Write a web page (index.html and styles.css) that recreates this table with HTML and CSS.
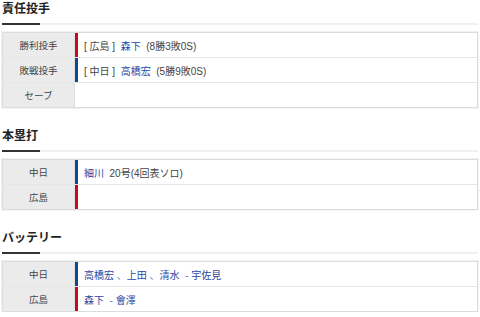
FILE: index.html
```html
<!DOCTYPE html>
<html lang="ja">
<head>
<meta charset="utf-8">
<title>試合結果</title>
<link rel="stylesheet" href="styles.css">
</head>
<body>
<section class="sec">
  <h2 class="ttl">責任投手</h2>
  <div class="tbl">
    <div class="row">
      <div class="lbl">勝利投手</div>
      <div class="val carp"><span class="txt">[ 広島 ]  <a class="lnk">森下</a>  <span class="sub">(8勝3敗0S)</span></span></div>
    </div>
    <div class="row">
      <div class="lbl">敗戦投手</div>
      <div class="val dra"><span class="txt">[ 中日 ]  <a class="lnk">高橋宏</a>  <span class="sub">(5勝9敗0S)</span></span></div>
    </div>
    <div class="row">
      <div class="lbl">セーブ</div>
      <div class="val"></div>
    </div>
  </div>
</section>
<section class="sec">
  <h2 class="ttl">本塁打</h2>
  <div class="tbl">
    <div class="row">
      <div class="lbl">中日</div>
      <div class="val dra"><span class="txt"><a class="lnk">細川</a>  <span class="sub">20号(4回表ソロ)</span></span></div>
    </div>
    <div class="row">
      <div class="lbl">広島</div>
      <div class="val carp"></div>
    </div>
  </div>
</section>
<section class="sec">
  <h2 class="ttl">バッテリー</h2>
  <div class="tbl">
    <div class="row">
      <div class="lbl">中日</div>
      <div class="val dra"><span class="txt"><a class="lnk">高橋宏</a> <span class="sep">、</span><a class="lnk">上田</a> <span class="sep">、</span><a class="lnk">清水</a>  <span class="sep">-</span> <a class="lnk">宇佐見</a></span></div>
    </div>
    <div class="row">
      <div class="lbl">広島</div>
      <div class="val carp"><span class="txt"><a class="lnk">森下</a>  <span class="sep">-</span> <a class="lnk">會澤</a></span></div>
    </div>
  </div>
</section>
</body>
</html>
```
FILE: styles.css
```css
html, body {
  margin: 0;
  padding: 0;
  background: #fff;
}
body {
  padding: 0 2px;
  font-family: "Liberation Sans", Arial, "Noto Sans CJK JP", sans-serif;
  color: #333;
}
.sec + .sec {
  margin-top: 19px;
}
.ttl {
  margin: 0 0 7px;
  font-size: 12px;
  line-height: 18px;
  font-weight: bold;
  color: #222;
  padding-bottom: 7px;
  background:
    linear-gradient(#333, #333) 0 100% / 38px 2px no-repeat,
    linear-gradient(#f0f0f0, #f0f0f0) 0 100% / 100% 2px no-repeat;
}
.tbl {
  border: 1px solid #dcdcdc;
  box-shadow: 0 0 0 1px #f3f3f3;
}
.row {
  display: flex;
  height: 24px;
}
.row + .row {
  border-top: 1px solid #e6e6e6;
}
.lbl {
  width: 71px;
  background: #ebebeb;
  border-right: 1px solid #e0e0e0;
  display: flex;
  align-items: center;
  justify-content: center;
  font-size: 9.5px;
  color: #444;
}
.val {
  flex: 1;
  display: flex;
  align-items: center;
  padding-left: 6px;
  font-size: 10px;
  color: #444;
  border-left: 3px solid transparent;
}
.txt {
  white-space: pre;
}
.val.carp {
  border-left-color: #cc0a1f;
}
.val.dra {
  border-left-color: #0b4a91;
}
.lnk {
  color: #2b46a4;
  text-decoration: none;
}
.sub {
  color: #444;
}
.sep {
  color: #6a7ab8;
}
```
